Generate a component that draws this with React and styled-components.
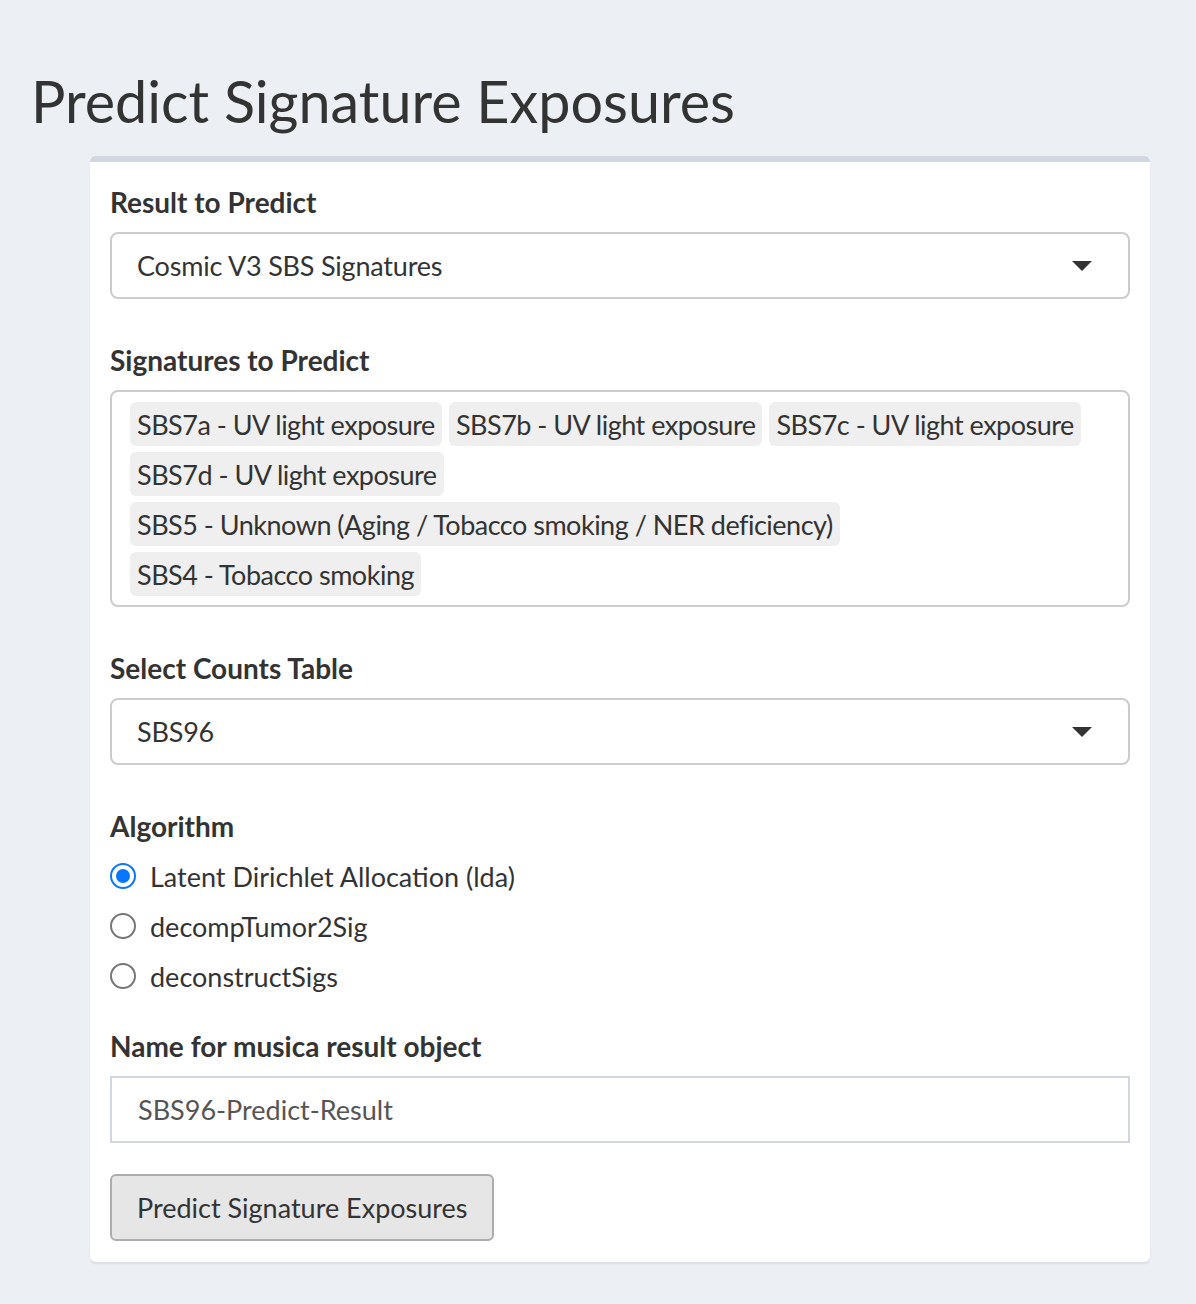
import styled, { createGlobalStyle } from 'styled-components';

const GlobalStyle = createGlobalStyle`
  html, body {
    margin: 0;
    padding: 0;
    background: #ecf0f5;
  }
  body {
    font-family: Lato, "Liberation Sans", sans-serif;
    color: #333;
  }
`;

const Page = styled.div`
  width: 1196px;
  min-height: 1304px;
  padding: 68px 46px 0 31px;
  box-sizing: border-box;
`;

const Title = styled.h2`
  margin: 0 0 22px 0;
  font-size: 57.5px;
  font-weight: 400;
  line-height: 66px;
  color: #333;
`;

const Box = styled.div`
  margin-left: 59px;
  width: 1060px;
  box-sizing: border-box;
  background: #fff;
  border-top: 6px solid #d2d6de;
  border-radius: 6px;
  box-shadow: 0 2px 2px rgba(0, 0, 0, 0.08);
  padding: 20px 20px 21px 20px;
`;

const Group = styled.div`
  margin-bottom: ${(p) => p.$gap || 41}px;
`;

const Label = styled.div`
  font-size: 28px;
  font-weight: 700;
  line-height: 40px;
  margin-bottom: 10px;
`;

const Select = styled.div`
  position: relative;
  display: flex;
  align-items: center;
  height: 67px;
  box-sizing: border-box;
  border: 2px solid #ccc;
  border-radius: 8px;
  padding: 0 60px 0 25px;
  font-size: 27px;
  letter-spacing: -0.2px;
`;

const Caret = styled.span`
  position: absolute;
  right: 36px;
  top: 50%;
  margin-top: -5px;
  width: 0;
  height: 0;
  border-left: 10px solid transparent;
  border-right: 10px solid transparent;
  border-top: 10px solid #333;
`;

const Multi = styled.div`
  display: flex;
  flex-wrap: wrap;
  gap: 6px 7px;
  box-sizing: border-box;
  border: 2px solid #ccc;
  border-radius: 8px;
  padding: 10px 24px 9px 18px;
`;

const Chip = styled.span`
  display: inline-flex;
  align-items: center;
  height: 44px;
  padding: 0 7px;
  background: #efefef;
  border-radius: 6px;
  font-size: 27px;
  letter-spacing: -0.5px;
  color: #333;
  white-space: nowrap;
`;

const RadioList = styled.div`
  display: flex;
  flex-direction: column;
  margin-top: -5px;
`;

const RadioRow = styled.label`
  display: flex;
  align-items: center;
  height: 50px;
  font-size: 27px;
  gap: 14px;
`;

const RadioDot = styled.span`
  width: 26px;
  height: 26px;
  box-sizing: border-box;
  border-radius: 50%;
  border: 2px solid ${(p) => (p.$on ? '#0a75ff' : '#767676')};
  background: #fff;
  display: flex;
  align-items: center;
  justify-content: center;
  flex-shrink: 0;

  &::after {
    content: '';
    display: ${(p) => (p.$on ? 'block' : 'none')};
    width: 14px;
    height: 14px;
    border-radius: 50%;
    background: #0a75ff;
  }
`;

const TextInput = styled.div`
  display: flex;
  align-items: center;
  height: 67px;
  box-sizing: border-box;
  border: 2px solid #d2d6de;
  padding: 0 26px;
  font-size: 27px;
  color: #555;
`;

const Button = styled.button`
  height: 67px;
  box-sizing: border-box;
  padding: 0 24px 0 25px;
  background: #e6e6e6;
  border: 2px solid #adadad;
  border-radius: 6px;
  font-family: inherit;
  font-size: 27px;
  color: #333;
`;

const signatures = [
  'SBS7a - UV light exposure',
  'SBS7b - UV light exposure',
  'SBS7c - UV light exposure',
  'SBS7d - UV light exposure',
  'SBS5 - Unknown (Aging / Tobacco smoking / NER deficiency)',
  'SBS4 - Tobacco smoking',
];

const algorithms = ['Latent Dirichlet Allocation (lda)', 'decompTumor2Sig', 'deconstructSigs'];

export default function App() {
  return (
    <>
      <GlobalStyle />
      <Page>
        <Title>Predict Signature Exposures</Title>
        <Box>
          <Group>
            <Label>Result to Predict</Label>
            <Select>
              Cosmic V3 SBS Signatures
              <Caret />
            </Select>
          </Group>
          <Group>
            <Label>Signatures to Predict</Label>
            <Multi>
              {signatures.map((s) => (
                <Chip key={s}>{s}</Chip>
              ))}
            </Multi>
          </Group>
          <Group>
            <Label>Select Counts Table</Label>
            <Select>
              SBS96
              <Caret />
            </Select>
          </Group>
          <Group $gap={25}>
            <Label>Algorithm</Label>
            <RadioList>
              {algorithms.map((a, i) => (
                <RadioRow key={a}>
                  <RadioDot $on={i === 0} />
                  {a}
                </RadioRow>
              ))}
            </RadioList>
          </Group>
          <Group $gap={31}>
            <Label>Name for musica result object</Label>
            <TextInput>SBS96-Predict-Result</TextInput>
          </Group>
          <Button>Predict Signature Exposures</Button>
        </Box>
      </Page>
    </>
  );
}
